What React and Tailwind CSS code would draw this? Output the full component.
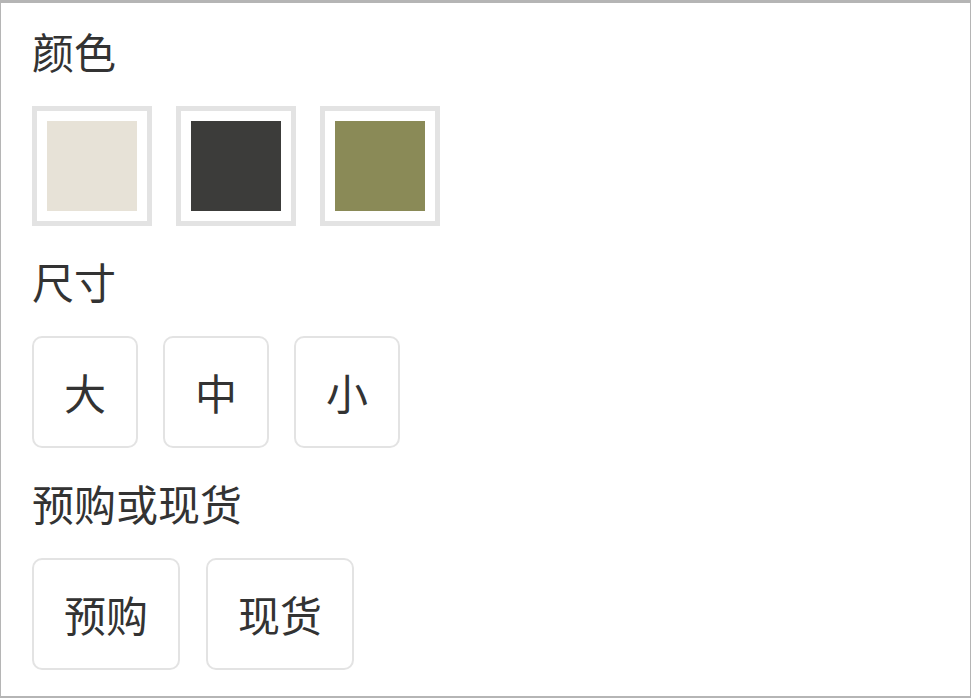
const colors = [
  { name: '米白', hex: 'bg-[#e7e2d7]' },
  { name: '深灰', hex: 'bg-[#3c3c3a]' },
  { name: '橄榄绿', hex: 'bg-[#8a8a57]' },
]

const sizes = ['大', '中', '小']
const stock = ['预购', '现货']

function Title({ children }) {
  return <h2 className="text-[42px] leading-[40px] text-[#333333]">{children}</h2>
}

function OptionButton({ label }) {
  return (
    <button className="h-[112px] px-[30px] flex items-center justify-center border-2 border-[#e3e3e3] rounded-[10px] bg-white text-[42px] leading-none text-[#333333]">
      {label}
    </button>
  )
}

export default function App() {
  return (
    <div className="w-[972px] h-[698px] bg-white">
      <div
        className="w-[971px] h-[698px] border-t-[3px] border-l border-r border-b-2 border-[#b5b5b5] pl-[31px] pt-[28px] flex flex-col gap-[35px]"
        style={{ fontFamily: '"Noto Sans CJK SC", "Noto Sans", sans-serif' }}
      >
        <Title>颜色</Title>
        <div className="flex gap-[24px]">
          {colors.map((c) => (
            <div key={c.name} className="w-[120px] h-[120px] border-[5px] border-[#e3e3e3] p-[10px] bg-white">
              <div className={`w-full h-full ${c.hex}`} />
            </div>
          ))}
        </div>

        <Title>尺寸</Title>
        <div className="flex gap-[25px]">
          {sizes.map((s) => (
            <OptionButton key={s} label={s} />
          ))}
        </div>

        <Title>预购或现货</Title>
        <div className="flex gap-[26px]">
          {stock.map((s) => (
            <OptionButton key={s} label={s} />
          ))}
        </div>
      </div>
    </div>
  )
}
